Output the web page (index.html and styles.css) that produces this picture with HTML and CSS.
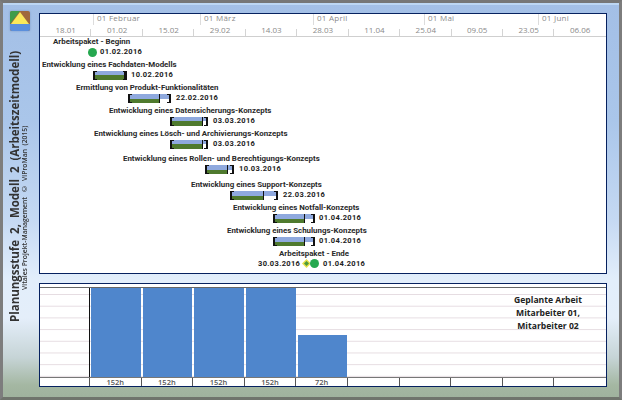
FILE: index.html
```html
<!DOCTYPE html>
<html lang="de">
<head>
<meta charset="utf-8">
<title>Planungsstufe 2</title>
<link rel="stylesheet" href="styles.css">
</head>
<body>
<div class="frame">
  <aside class="rail">
    <svg class="logo" viewBox="0 0 20 20" width="20" height="20">
      <rect x="0" y="0" width="20" height="20" rx="2" fill="#a0683c"/>
      <path d="M0 2a2 2 0 0 1 2-2h8L0 13z" fill="#3f9c4a"/>
      <path d="M0 13h20v5a2 2 0 0 1-2 2H2a2 2 0 0 1-2-2z" fill="#5b8fdc"/>
      <path d="M10 1L19 13H1z" fill="#fbe95a"/>
    </svg>
    <div class="rail-texts">
      <div class="rail-title">Planungsstufe&nbsp; 2,&nbsp; Modell&nbsp; 2&nbsp; (Arbeitszeitmodell)</div>
      <div class="rail-sub">Vitales Projekt-Management&nbsp; ©&nbsp; ViProMan&nbsp; (2015)</div>
    </div>
  </aside>
  <main class="main">
    <section class="panel gantt">
      <div class="months">
        <span class="month" style="width:53px"></span>
        <span class="month" style="width:107px">01 Februar</span>
        <span class="month" style="width:113px">01 März</span>
        <span class="month" style="width:111px">01 April</span>
        <span class="month" style="width:114px">01 Mai</span>
        <span class="month" style="width:69px">01 Juni</span>
      </div>
      <div class="weeks">
        <span>18.01</span><span>01.02</span><span>15.02</span><span>29.02</span><span>14.03</span><span>28.03</span><span>11.04</span><span>25.04</span><span>09.05</span><span>23.05</span><span>06.06</span>
      </div>
      <div class="canvas">
        <div class="label" style="left:13px;top:-1px">Arbeitspaket - Beginn</div>
        <div class="dot" style="left:48px;top:11px"></div>
        <div class="date" style="left:60px;top:9px">01.02.2016</div>

        <div class="label" style="left:2px;top:22px">Entwicklung eines Fachdaten-Modells</div>
        <div class="bar" style="left:53px;top:34px;width:34px"><i style="width:100%"></i></div>
        <div class="date" style="left:91px;top:32px">10.02.2016</div>

        <div class="label" style="left:36px;top:45px">Ermittlung von Produkt-Funktionalitäten</div>
        <div class="bar" style="left:88px;top:57px;width:43px"><i style="width:77%"></i></div>
        <div class="date" style="left:136px;top:55px">22.02.2016</div>

        <div class="label" style="left:69px;top:68px">Entwicklung eines Datensicherungs-Konzepts</div>
        <div class="bar" style="left:130px;top:80px;width:38px"><i style="width:90%"></i></div>
        <div class="date" style="left:173px;top:78px">03.03.2016</div>

        <div class="label" style="left:54px;top:91px">Entwicklung eines Lösch- und Archivierungs-Konzepts</div>
        <div class="bar" style="left:130px;top:103px;width:38px"><i style="width:90%"></i></div>
        <div class="date" style="left:173px;top:101px">03.03.2016</div>

        <div class="label" style="left:83px;top:116px">Entwicklung eines Rollen- und Berechtigungs-Konzepts</div>
        <div class="bar" style="left:165px;top:128px;width:29px"><i style="width:83%"></i></div>
        <div class="date" style="left:199px;top:126px">10.03.2016</div>

        <div class="label" style="left:151px;top:142px">Entwicklung eines Support-Konzepts</div>
        <div class="bar" style="left:190px;top:154px;width:48px"><i style="width:73%"></i></div>
        <div class="date" style="left:243px;top:152px">22.03.2016</div>

        <div class="label" style="left:193px;top:165px">Entwicklung eines Notfall-Konzepts</div>
        <div class="bar" style="left:233px;top:177px;width:42px"><i style="width:79%"></i></div>
        <div class="date" style="left:279px;top:175px">01.04.2016</div>

        <div class="label" style="left:187px;top:188px">Entwicklung eines Schulungs-Konzepts</div>
        <div class="bar" style="left:233px;top:200px;width:42px"><i style="width:79%"></i></div>
        <div class="date" style="left:279px;top:198px">01.04.2016</div>

        <div class="label" style="left:239px;top:211px">Arbeitspaket - Ende</div>
        <div class="date" style="left:218px;top:221px">30.03.2016</div>
        <svg class="diamond" style="left:262px;top:222px" width="9" height="9" viewBox="0 0 9 9">
          <path d="M4.5 0L9 4.5 4.5 9 0 4.5z" fill="#e6e04a"/>
          <path d="M4.5 2L7 4.5 4.5 7 2 4.5z" fill="#4f9a3a"/>
        </svg>
        <div class="dot" style="left:270px;top:222px"></div>
        <div class="date" style="left:283px;top:221px">01.04.2016</div>
      </div>
    </section>
    <section class="panel chart">
      <div class="plot">
        <div class="axis-gap"></div>
        <div class="bars">
          <div class="col"><b class="full"></b></div>
          <div class="col"><b class="full"></b></div>
          <div class="col"><b class="full"></b></div>
          <div class="col"><b class="full"></b></div>
          <div class="col"><b class="part"></b></div>
        </div>
        <div class="note">Geplante Arbeit<br>Mitarbeiter 01,<br>Mitarbeiter 02</div>
      </div>
      <div class="hours">
        <span class="hours-first"></span>
        <span>152h</span><span>152h</span><span>152h</span><span>152h</span><span>72h</span><span></span><span></span><span></span><span></span><span></span>
      </div>
    </section>
  </main>
</div>
</body>
</html>
```
FILE: styles.css
```css
* { box-sizing: border-box; }
html, body { margin: 0; padding: 0; }
body { width: 622px; height: 400px; overflow: hidden; background: #fff; }
.frame {
  width: 622px;
  height: 400px;
  display: flex;
  border: 3px solid #7d7d7d;
  border-top-color: #767676;
  border-bottom-color: #6f746c;
  background: linear-gradient(180deg, #a3bfe6 0%, #aac6ea 30%, #c5d9f3 55%, #e2eefb 70%, #e4eefa 80%, #c6d4d6 90%, #a4b7a2 97%, #9fb29d 100%);
  box-shadow: inset 0 2px 0 #bcd6f3;
  padding: 10px 12px 0 0;
}
.rail { width: 36px; flex: none; display: flex; flex-direction: column; align-items: flex-start; }
.logo { margin: -2px 0 0 7px; flex: none; filter: drop-shadow(0 0 1px #7f9cc8); }
.rail-texts { flex: 1; display: flex; align-items: flex-start; margin-left: 5px; }
.rail-title, .rail-sub {
  writing-mode: vertical-rl;
  transform: rotate(180deg);
  white-space: nowrap;
  font-family: "Open Sans", "Liberation Sans", sans-serif;
  color: #333;
}
.rail-title { font-size: 11.5px; font-weight: 700; line-height: 13px; margin-top: 55px; height: 236px; text-align: left; }
.rail-sub { font-size: 6.8px; font-weight: 600; line-height: 8px; margin-top: 99px; height: 160px; text-align: left; }
.main { width: 568px; flex: none; display: flex; flex-direction: column; gap: 9px; }
.panel { border: 1px solid #06215f; background: #fff; }
.gantt { height: 261px; display: flex; flex-direction: column; }
.months { display: flex; height: 11px; }
.month {
  flex: none;
  font: 8px/8px "Open Sans", "Liberation Sans", sans-serif;
  color: #8a8a8a;
  padding: 0 0 0 3px;
  border-left: 1px solid #dcdcdc;
  letter-spacing: .25px;
  height: 11px;
}
.month:first-child { border-left: 0; }
.weeks {
  display: grid;
  grid-template-columns: repeat(11, 51.45px);
  height: 12px;
  border-bottom: 1px solid #cfcfcf;
}
.weeks span {
  font: 8px/9px "Open Sans", "Liberation Sans", sans-serif;
  color: #8a8a8a;
  text-align: center;
  background: linear-gradient(#d4d4d4, #d4d4d4) right bottom / 1px 7px no-repeat;
}
.weeks span:last-child { background: none; }
.canvas { position: relative; flex: 1; }
.label, .date {
  position: absolute;
  margin-top: 1px;
  white-space: nowrap;
  font: 700 7.9px/10px Roboto, "Liberation Sans", sans-serif;
  color: #2a2a2a;
}
.date { color: #222; font-size: 7.5px; letter-spacing: .35px; }
.dot { position: absolute; width: 9px; height: 9px; border-radius: 50%; background: #25a84f; }
.diamond { position: absolute; }
.bar {
  position: absolute;
  height: 9px;
  border-left: 2px solid #111;
  border-right: 2px solid #111;
  background: linear-gradient(180deg, #8fa9de 0, #8fa9de 50%, #fff 50%, #fff 100%);
}
.bar::before, .bar::after {
  content: "";
  position: absolute;
  top: 0;
  bottom: 0;
  width: 2px;
  border-top: 1px solid #111;
  border-bottom: 1px solid #111;
}
.bar::before { left: 0; }
.bar::after { right: 0; }
.bar i { display: block; height: 100%; background: linear-gradient(180deg, #8fa9de 0, #8fa9de 50%, #4f7a2e 50%, #4f7a2e 100%); border-right: 1px solid #111; }
.chart { height: 104px; display: flex; flex-direction: column; position: relative; }
.plot {
  height: 93px;
  margin-top: 3px;
  border-top: 1px solid #666;
  display: flex;
  position: relative;
  background-image: linear-gradient(180deg, transparent 10.7px, #e6dde2 10.7px);
  background-size: 100% 11.7px;
  background-position: 0 7px;
}
.axis-gap { width: 50px; flex: none; border-right: 1px solid #111; }
.bars { display: flex; align-items: flex-end; height: 100%; }
.col { width: 51.7px; height: 100%; display: flex; align-items: flex-end; padding: 0 1px; }
.col b { display: block; width: 100%; background: #4f86cc; }
.full { height: 100%; }
.part { height: 47%; }
.note {
  position: absolute;
  right: 13px;
  top: 6px;
  width: 90px;
  text-align: center;
  font: 700 8.6px/13px "Open Sans", "Liberation Sans", sans-serif;
  color: #222;
}
.hours { display: grid; grid-template-columns: 50px repeat(10, 51.6px); border-top: 1px solid #777; flex: 1; }
.hours span {
  font: 600 7.5px/8px "Open Sans", "Liberation Sans", sans-serif;
  color: #555;
  text-align: center;
  border-right: 1px solid #555;
}
.hours span:last-child { border-right: 0; }
```
